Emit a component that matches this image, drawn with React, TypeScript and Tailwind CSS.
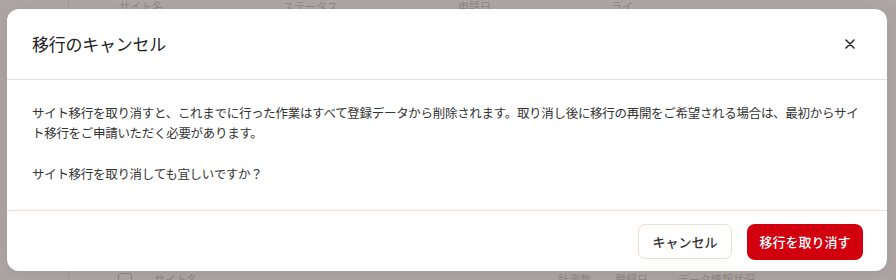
import React from "react";

const jp = "[font-family:'Noto_Sans_CJK_JP','Noto_Sans',sans-serif]";

export default function App() {
  return (
    <div className={`relative h-[280px] w-[896px] overflow-hidden bg-[#aea6a4] ${jp}`}>
      {/* faint background page */}
      <div className="absolute inset-0 flex">
        <div className="w-[69px] border-r border-[#a29a98]" />
        <div className="flex flex-1 flex-col justify-between">
          <div className="flex h-[6px] items-end gap-[120px] pl-[50px] text-[11px] leading-none text-[#8f8785]">
            <span className="-mb-[6px]">サイト名</span>
            <span className="-mb-[6px]">ステータス</span>
            <span className="-mb-[6px]">申請日</span>
            <span className="-mb-[6px]">ライ</span>
          </div>
          <div className="flex h-[10px] items-start pl-[49px] text-[11px] leading-none text-[#8f8785]">
            <span className="mt-[3px] h-[14px] w-[14px] rounded-[3px] border border-[#8f8785]" />
            <span className="ml-[22px] mt-[4px]">サイト名</span>
            <span className="ml-[360px] mt-[4px]">計測数</span>
            <span className="ml-[24px] mt-[4px]">登録日</span>
            <span className="ml-[30px] mt-[4px]">データ情報状況</span>
          </div>
        </div>
      </div>

      {/* modal */}
      <div className="absolute left-[7px] top-[9px] flex w-[880px] flex-col rounded-[12px] bg-white shadow-[0_4px_20px_rgba(0,0,0,0.08)]">
        <div className="flex h-[71px] items-center justify-between border-b border-[#e6dfda] pl-[25px] pr-[27px]">
          <h2 className="text-[17px] font-normal leading-[26px] tracking-[-0.25px] text-[#222]">移行のキャンセル</h2>
          <button className="flex h-[20px] w-[20px] items-center justify-center text-[#222]" aria-label="close">
            <svg width="10" height="10" viewBox="0 0 10 10" fill="none" stroke="currentColor" strokeWidth="1.5" strokeLinecap="round">
              <path d="M1 1L9 9M9 1L1 9" />
            </svg>
          </button>
        </div>
        <div className="border-b border-[#ecdfd4] pl-[25px] pr-[20px] pb-[26px] pt-[23px] text-[12.5px] leading-[20px] tracking-[-0.3px] text-[#333]">
          <p>
            サイト移行を取り消すと、これまでに行った作業はすべて登録データから削除されます。取り消し後に移行の再開をご希望される場合は、最初からサイト移行をご申請いただく必要があります。
          </p>
          <p className="mt-[21px]">サイト移行を取り消しても宜しいですか？</p>
        </div>
        <div className="flex h-[60px] items-center justify-end gap-[15px] pr-[24px] pt-[1px]">
          <button className="flex h-[35px] w-[94px] items-center justify-center rounded-[7px] border border-[#eadfd6] bg-white text-[13px] font-medium text-[#333]">
            キャンセル
          </button>
          <button className="flex h-[36px] w-[116px] items-center justify-center rounded-[8px] bg-[#d2000f] text-[13px] font-medium text-white">
            移行を取り消す
          </button>
        </div>
      </div>
    </div>
  );
}
